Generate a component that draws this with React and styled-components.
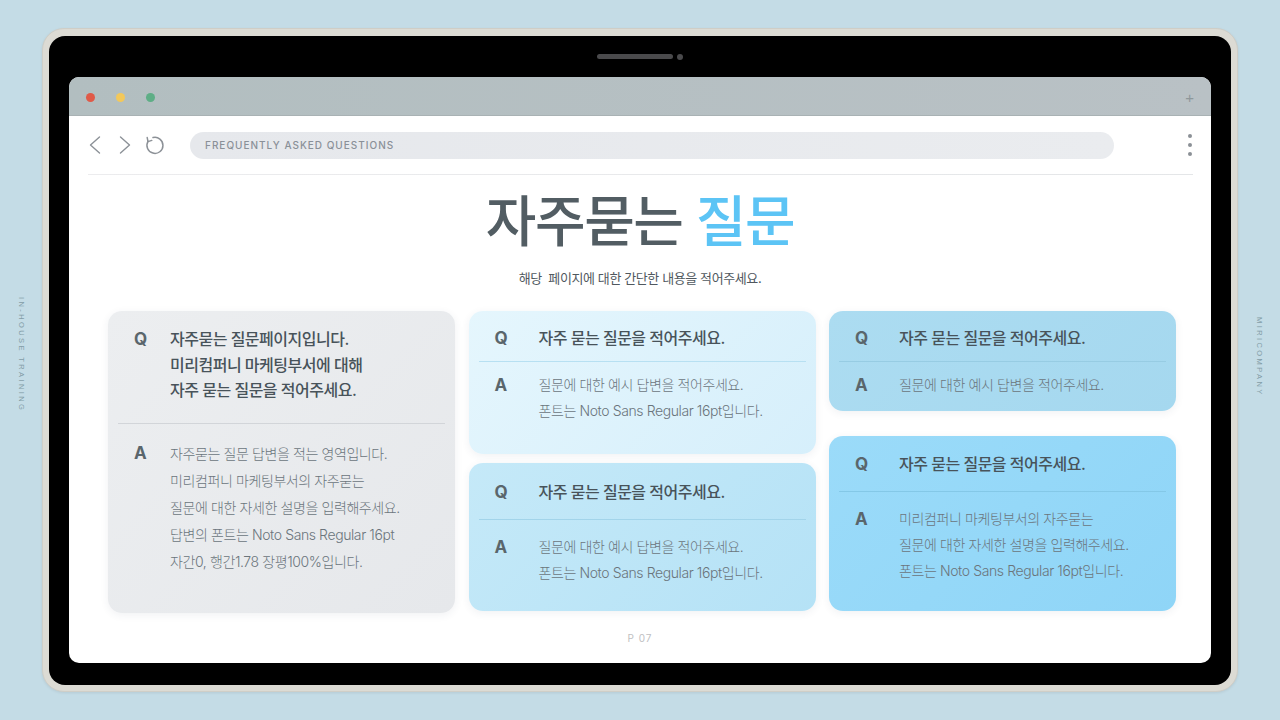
import React from "react";
import styled, { createGlobalStyle } from "styled-components";

const GlobalStyle = createGlobalStyle`
  html, body { margin: 0; padding: 0; }
  body {
    width: 1280px;
    height: 720px;
    overflow: hidden;
    background: #c4dce6;
    font-family: Inter, "Noto Sans CJK KR", sans-serif;
  }
`;

const Stage = styled.div`
  width: 1280px;
  height: 720px;
  display: flex;
  align-items: center;
`;

const SideLabel = styled.div`
  width: 42px;
  display: flex;
  justify-content: center;
  margin-top: ${(p) => p.$shift}px;
`;

const VerticalText = styled.span`
  writing-mode: vertical-rl;
  font-family: "Liberation Sans", Arial, sans-serif;
  font-size: 7.5px;
  letter-spacing: 2.4px;
  color: #839ca6;
`;

const Device = styled.div`
  width: 1196px;
  height: 664px;
  box-sizing: border-box;
  padding: 7px 6px 6px;
  border-radius: 22px;
  background: #dcdbd4;
  border: 1px solid #cfcec7;
  box-shadow: 0 1px 3px rgba(0, 0, 0, 0.08);
  display: flex;
`;

const Bezel = styled.div`
  flex: 1;
  background: #000;
  border-radius: 16px;
  display: flex;
  flex-direction: column;
  padding: 0 20px 22px 20px;
`;

const CameraBar = styled.div`
  height: 41px;
  display: flex;
  align-items: center;
  justify-content: center;
  gap: 4px;
`;

const Speaker = styled.div`
  width: 76px;
  height: 5px;
  border-radius: 3px;
  background: #4a4a4c;
`;

const Lens = styled.div`
  width: 6px;
  height: 6px;
  border-radius: 50%;
  background: #4a4a4c;
`;

const Screen = styled.div`
  flex: 1;
  background: #fff;
  border-radius: 10px;
  overflow: hidden;
  display: flex;
  flex-direction: column;
`;

const TitleBar = styled.div`
  height: 39px;
  box-sizing: border-box;
  background: linear-gradient(90deg, #b2bec0, #b9c1c5);
  border-bottom: 1px solid #a9b2b4;
  display: flex;
  align-items: center;
  padding: 3px 17px 0 17px;
  gap: 21px;
`;

const Dot = styled.span`
  width: 9px;
  height: 9px;
  border-radius: 50%;
  background: ${(p) => p.$color};
`;

const Plus = styled.span`
  margin-left: auto;
  color: #8e979a;
  font-family: "Liberation Sans", Arial, sans-serif;
  font-size: 15px;
  line-height: 1;
`;

const Toolbar = styled.div`
  height: 58px;
  display: flex;
  align-items: center;
  padding: 0 17px 0 15px;
  gap: 8px;
`;

const NavButton = styled.span`
  display: flex;
  align-items: center;
  justify-content: center;
  width: 22px;
`;

const Address = styled.div`
  margin-left: 16px;
  width: 924px;
  height: 27px;
  border-radius: 14px;
  background: linear-gradient(90deg, #e6e8ec, #eaecef);
  display: flex;
  align-items: center;
  padding-left: 15px;
  box-sizing: border-box;
  font-family: Inter, "Liberation Sans", sans-serif;
  font-size: 10px;
  font-weight: 500;
  letter-spacing: 1px;
  color: #8a9098;
`;

const Kebab = styled.div`
  margin-left: auto;
  display: flex;
  flex-direction: column;
  gap: 5px;
  padding-right: 2px;

  span {
    width: 4px;
    height: 4px;
    border-radius: 50%;
    background: #8b9096;
  }
`;

const Rule = styled.div`
  height: 1px;
  margin: 0 18px 0 19px;
  background: linear-gradient(90deg, #ececee, #e4e6e8);
`;

const Content = styled.main`
  display: flex;
  flex-direction: column;
  align-items: center;
`;

const Heading = styled.h1`
  margin: 19px 0 0;
  font-size: 55px;
  line-height: 1;
  font-weight: 500;
  letter-spacing: -1.4px;
  color: #525d63;

  em {
    font-style: normal;
    color: #5cc4f5;
  }
`;

const Lead = styled.p`
  margin: 20px 0 0;
  font-size: 13px;
  line-height: 18px;
  letter-spacing: -0.4px;
  color: #50585e;
  white-space: pre;
`;

const Grid = styled.div`
  align-self: flex-start;
  margin: 24px 0 0 39px;
  display: grid;
  grid-template-columns: repeat(3, 347px);
  column-gap: 13.5px;
  align-items: start;
`;

const Column = styled.div`
  display: flex;
  flex-direction: column;
  gap: ${(p) => p.$gap}px;
`;

const Card = styled.section`
  height: ${(p) => p.$h}px;
  box-sizing: border-box;
  padding-top: ${(p) => p.$pt}px;
  border-radius: 14px;
  background: ${(p) => p.$bg};
  box-shadow: 0 2px 8px rgba(40, 60, 80, 0.07);
`;

const Row = styled.div`
  display: flex;
  padding-left: 26px;
`;

const Label = styled.span`
  flex: 0 0 ${(p) => p.$w}px;
  font-family: Inter, "Liberation Sans", sans-serif;
  font-size: 17px;
  font-weight: 700;
  line-height: ${(p) => p.$lh}px;
  color: #5a666c;
`;

const Question = styled.p`
  margin: 0;
  font-size: 16px;
  line-height: 25.5px;
  font-weight: 500;
  letter-spacing: -0.5px;
  color: #48535a;
`;

const Answer = styled.p`
  margin: 0;
  font-size: 14px;
  line-height: ${(p) => p.$lh}px;
  font-weight: 300;
  letter-spacing: -0.4px;
  color: #6b757c;
`;

const Divider = styled.div`
  height: 1px;
  margin: ${(p) => p.$top}px 10px ${(p) => p.$bottom}px;
  background: ${(p) => p.$color};
`;

const PageNo = styled.div`
  margin-top: 19px;
  font-family: Inter, "Liberation Sans", sans-serif;
  font-size: 10px;
  letter-spacing: 1px;
  color: #c0c0c2;
`;

const Chevron = ({ dir }) => (
  <svg width="12" height="18" viewBox="0 0 12 18" fill="none">
    <path
      d={dir === "left" ? "M10.5 1 L1.5 9 L10.5 17" : "M1.5 1 L10.5 9 L1.5 17"}
      stroke="#8c9197"
      strokeWidth="1.4"
      strokeLinecap="round"
      strokeLinejoin="round"
    />
  </svg>
);

const Reload = () => (
  <svg width="22" height="22" viewBox="0 0 22 22" fill="none">
    <path
      d="M9 3.6 A8 8 0 1 1 4 7.4"
      stroke="#8c9197"
      strokeWidth="1.5"
      strokeLinecap="round"
    />
    <path
      d="M3.2 3.6 L4 7.6 L7.8 6.4"
      stroke="#8c9197"
      strokeWidth="1.5"
      strokeLinecap="round"
      strokeLinejoin="round"
    />
  </svg>
);

const cards = [
  [
    {
      h: 302, pt: 16, top: 19, bottom: 16, w: 36, lh: 27,
      bg: "linear-gradient(135deg, #eceef0, #e6e8eb)", line: "#d2d5d9",
      q: ["자주묻는 질문페이지입니다.", "미리컴퍼니 마케팅부서에 대해", "자주 묻는 질문을 적어주세요."],
      a: [
        "자주묻는 질문 답변을 적는 영역입니다.",
        "미리컴퍼니 마케팅부서의 자주묻는",
        "질문에 대한 자세한 설명을 입력해주세요.",
        "답변의 폰트는 Noto Sans Regular 16pt",
        "자간0, 행간1.78 장평100%입니다.",
      ],
    },
  ],
  [
    {
      h: 143, pt: 15, top: 9, bottom: 10, w: 44, lh: 26,
      bg: "linear-gradient(135deg, #e5f6fd, #d6effb)", line: "#b7e0f2",
      q: ["자주 묻는 질문을 적어주세요."],
      a: ["질문에 대한 예시 답변을 적어주세요.", "폰트는 Noto Sans Regular 16pt입니다."],
    },
    {
      h: 148, pt: 17, top: 13, bottom: 14, w: 44, lh: 26,
      bg: "linear-gradient(135deg, #c5e9f8, #b5e2f6)", line: "#a2d4ea",
      q: ["자주 묻는 질문을 적어주세요."],
      a: ["질문에 대한 예시 답변을 적어주세요.", "폰트는 Noto Sans Regular 16pt입니다."],
    },
  ],
  [
    {
      h: 100, pt: 15, top: 9, bottom: 10, w: 44, lh: 26,
      bg: "linear-gradient(135deg, #acdcf1, #a5d8ef)", line: "#97cce3",
      q: ["자주 묻는 질문을 적어주세요."],
      a: ["질문에 대한 예시 답변을 적어주세요."],
    },
    {
      h: 175, pt: 16, top: 13, bottom: 14, w: 44, lh: 26,
      bg: "linear-gradient(135deg, #9bdbf9, #8fd5f7)", line: "#84c8e7",
      q: ["자주 묻는 질문을 적어주세요."],
      a: [
        "미리컴퍼니 마케팅부서의 자주묻는",
        "질문에 대한 자세한 설명을 입력해주세요.",
        "폰트는 Noto Sans Regular 16pt입니다.",
      ],
    },
  ],
];

const columnGaps = [0, 9, 25];

const FaqCard = ({ c }) => (
  <Card $h={c.h} $pt={c.pt} $bg={c.bg}>
    <Row>
      <Label $w={c.w} $lh={25.5}>Q</Label>
      <Question>
        {c.q.map((l, i) => (
          <React.Fragment key={i}>
            {i > 0 && <br />}
            {l}
          </React.Fragment>
        ))}
      </Question>
    </Row>
    <Divider $top={c.top} $bottom={c.bottom} $color={c.line} />
    <Row>
      <Label $w={c.w} $lh={c.lh}>A</Label>
      <Answer $lh={c.lh}>
        {c.a.map((l, i) => (
          <React.Fragment key={i}>
            {i > 0 && <br />}
            {l}
          </React.Fragment>
        ))}
      </Answer>
    </Row>
  </Card>
);

export default function App() {
  return (
    <>
      <GlobalStyle />
      <Stage>
        <SideLabel $shift={-10}>
          <VerticalText>IN-HOUSE TRAINING</VerticalText>
        </SideLabel>
        <Device>
          <Bezel>
            <CameraBar>
              <Speaker />
              <Lens />
            </CameraBar>
            <Screen>
              <TitleBar>
                <Dot $color="#e05a48" />
                <Dot $color="#f3c85a" />
                <Dot $color="#5eae86" />
                <Plus>+</Plus>
              </TitleBar>
              <Toolbar>
                <NavButton><Chevron dir="left" /></NavButton>
                <NavButton><Chevron dir="right" /></NavButton>
                <NavButton><Reload /></NavButton>
                <Address>FREQUENTLY ASKED QUESTIONS</Address>
                <Kebab>
                  <span />
                  <span />
                  <span />
                </Kebab>
              </Toolbar>
              <Rule />
              <Content>
                <Heading>
                  자주묻는 <em>질문</em>
                </Heading>
                <Lead>{"해당  페이지에 대한 간단한 내용을 적어주세요."}</Lead>
                <Grid>
                  {cards.map((col, ci) => (
                    <Column key={ci} $gap={columnGaps[ci]}>
                      {col.map((c, i) => (
                        <FaqCard key={i} c={c} />
                      ))}
                    </Column>
                  ))}
                </Grid>
                <PageNo>P 07</PageNo>
              </Content>
            </Screen>
          </Bezel>
        </Device>
        <SideLabel $shift={-6}>
          <VerticalText>MIRICOMPANY</VerticalText>
        </SideLabel>
      </Stage>
    </>
  );
}
